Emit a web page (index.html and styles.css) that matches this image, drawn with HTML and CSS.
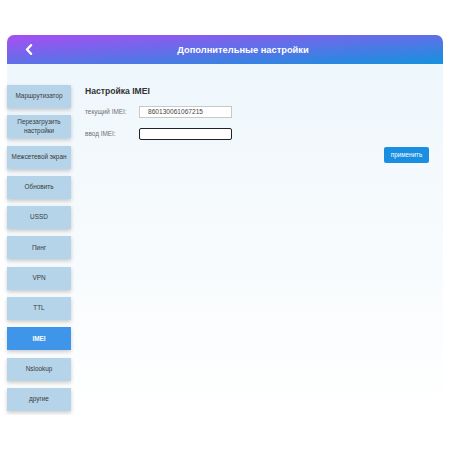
FILE: index.html
```html
<!DOCTYPE html>
<html lang="ru">
<head>
<meta charset="utf-8">
<title>Дополнительные настройки</title>
<link rel="stylesheet" href="styles.css">
</head>
<body>
<div class="app">
  <header class="topbar">
    <span class="back">
      <svg width="8" height="11" viewBox="0 0 8 11"><polyline points="6,1.2 2,5.5 6,9.8" fill="none" stroke="#fff" stroke-width="2.4" stroke-linecap="round" stroke-linejoin="round"/></svg>
    </span>
    <h1 class="title">Дополнительные настройки</h1>
  </header>
  <div class="content">
    <nav class="sidebar">
      <div class="nav-btn">Маршрутизатор</div>
      <div class="nav-btn">Перезагрузить<br>настройки</div>
      <div class="nav-btn">Межсетевой экран</div>
      <div class="nav-btn">Обновить</div>
      <div class="nav-btn">USSD</div>
      <div class="nav-btn">Пинг</div>
      <div class="nav-btn">VPN</div>
      <div class="nav-btn">TTL</div>
      <div class="nav-btn active">IMEI</div>
      <div class="nav-btn">Nslookup</div>
      <div class="nav-btn">другие</div>
    </nav>
    <main class="main">
      <h2 class="section-title">Настройка IMEI</h2>
      <div class="row">
        <span class="label">текущий IMEI:</span>
        <div class="field">860130061067215</div>
      </div>
      <div class="row">
        <span class="label">ввод IMEI:</span>
        <div class="field focused"></div>
      </div>
      <div class="actions">
        <button class="apply">применить</button>
      </div>
    </main>
  </div>
</div>
</body>
</html>
```

FILE: styles.css
```css
html, body {
  margin: 0;
  padding: 0;
  background: #ffffff;
  font-family: "Liberation Sans", Arial, sans-serif;
}

.app {
  margin: 35px 7px 0 7px;
}

.topbar {
  height: 29px;
  border-radius: 7px 7px 0 0;
  background: linear-gradient(to bottom right, #a84ef2, #1592de);
  display: flex;
  align-items: center;
}

.back {
  width: 8px;
  height: 11px;
  margin-left: 18px;
  display: flex;
}

.title {
  margin: 0;
  flex: 1;
  text-align: center;
  color: #ffffff;
  font-size: 9.3px;
  font-weight: bold;
  padding-left: 10px;
}

.content {
  display: flex;
  padding-top: 21px;
  min-height: 330px;
  background: linear-gradient(to bottom, #eef7fc 0%, #f6fafd 45%, #ffffff 100%);
}

.sidebar {
  width: 64px;
  display: flex;
  flex-direction: column;
  gap: 7.3px;
}

.nav-btn {
  height: 23px;
  background: #b5d4e9;
  color: #3a3a3a;
  font-size: 6.4px;
  line-height: 8.5px;
  text-align: center;
  display: flex;
  align-items: center;
  justify-content: center;
  box-shadow: 0 2px 4px rgba(0, 0, 0, 0.2);
  white-space: nowrap;
}

.nav-btn.active {
  background: #3e95ea;
  color: #ffffff;
  font-weight: bold;
}

.main {
  flex: 1;
  padding: 0 14px 0 14px;
}

.section-title {
  margin: 0 0 9px 0;
  font-size: 8.6px;
  line-height: 12px;
  font-weight: bold;
  color: #333;
}

.row {
  display: flex;
  align-items: center;
  height: 12px;
  margin-bottom: 10px;
}

.label {
  width: 54px;
  font-size: 6.4px;
  color: #707070;
  margin-top: -1px;
}

.field {
  box-sizing: border-box;
  width: 93px;
  height: 12px;
  border: 1px solid #c8c8c8;
  background: #fff;
  font-size: 6.6px;
  line-height: 10px;
  color: #444;
  padding-left: 8px;
}

.field.focused {
  border: 1.5px solid #222;
  border-radius: 2px;
}

.actions {
  display: flex;
  justify-content: flex-end;
  margin-top: -3.5px;
}

.apply {
  width: 45px;
  height: 16px;
  border: none;
  border-radius: 2px;
  background: #1a8ee0;
  color: #fff;
  font-family: "Liberation Sans", Arial, sans-serif;
  font-size: 6.3px;
  padding: 0;
}
```
